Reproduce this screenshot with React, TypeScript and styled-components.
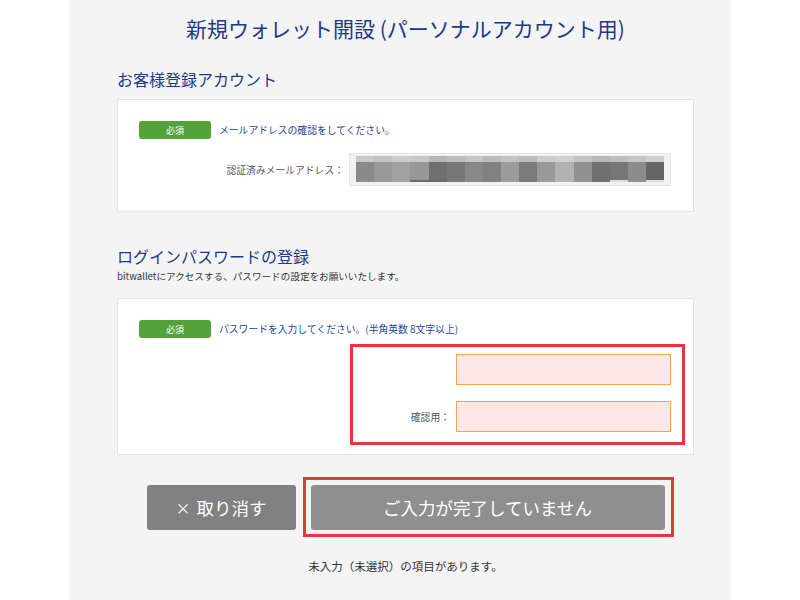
import React from "react";
import styled, { createGlobalStyle } from "styled-components";

const GlobalStyle = createGlobalStyle`
  html, body { margin: 0; padding: 0; background: #ffffff; }
  body { font-family: "Noto Sans CJK JP", "Noto Sans", sans-serif; }
  * { box-sizing: border-box; }
`;

const Page = styled.div`
  width: 662px;
  min-height: 600px;
  margin: 0 auto;
  background: #f4f4f4;
  padding: 13px 37px 0 48px;
  display: flex;
  flex-direction: column;
`;

const Title = styled.h1`
  margin: 0;
  font-size: 21px;
  font-weight: 400;
  line-height: 30px;
  color: #1c3a8a;
  text-align: center;
`;

const SectionHeading = styled.h2<{ $top: number }>`
  margin: ${(p) => p.$top}px 0 0;
  font-size: 16px;
  font-weight: 400;
  line-height: 24px;
  color: #1c3a8a;
`;

const SubText = styled.p`
  margin: 0;
  font-size: 9.6px;
  line-height: 16px;
  color: #333;
`;

const Card = styled.section<{ $pad: string; $top: number }>`
  margin-top: ${(p) => p.$top}px;
  background: #ffffff;
  border: 1px solid #e4e4e4;
  padding: ${(p) => p.$pad};
  display: flex;
  flex-direction: column;
`;

const RequiredRow = styled.div`
  display: flex;
  align-items: center;
  gap: 8px;
`;

const Badge = styled.span`
  flex: none;
  width: 72px;
  height: 18px;
  border-radius: 3px;
  background: #53a33b;
  color: #ffffff;
  font-size: 9px;
  display: flex;
  align-items: center;
  justify-content: center;
`;

const Message = styled.span`
  font-size: 9.8px;
  color: #23449a;
`;

const FieldRow = styled.div<{ $top: number; $labelW: number }>`
  margin-top: ${(p) => p.$top}px;
  display: grid;
  grid-template-columns: ${(p) => p.$labelW}px 1fr;
  column-gap: 5px;
  align-items: center;
`;

const Label = styled.span`
  text-align: right;
  font-size: 9.8px;
  color: #555;
`;

const MaskedField = styled.div`
  height: 33px;
  border: 1px solid #e6e6e6;
  background: #f2f2f2;
  padding: 2px 6px 3px 6px;
  display: flex;
  flex-direction: column;
`;

const MaskStrip = styled.div<{ $h: number }>`
  height: ${(p) => p.$h}px;
  display: flex;
`;

const MaskCell = styled.div`
  flex: 1;
`;

const Annotation = styled.div`
  border: 3px solid #e8343a;
`;

const PasswordBox = styled(Annotation)`
  margin-top: 6px;
  width: 335px;
  margin-left: auto;
  padding: 7px 11px 10px 0;
  display: flex;
  flex-direction: column;
  gap: 16px;
`;

const PwRow = styled.div`
  display: grid;
  grid-template-columns: 1fr 215px;
  column-gap: 6px;
  align-items: center;
`;

const PwInput = styled.input`
  display: block;
  height: 31px;
  width: 215px;
  margin: 0;
  border: 1px solid #f2a45a;
  background: #fde7e7;
  outline: none;
  padding: 0 6px;
`;

const ButtonRow = styled.div`
  margin-top: 30px;
  display: flex;
  justify-content: center;
  gap: 15px;
`;

const Button = styled.button<{ $w: number; $bg: string }>`
  width: ${(p) => p.$w}px;
  height: 45px;
  border: none;
  border-radius: 3px;
  background: ${(p) => p.$bg};
  color: #ffffff;
  font-family: "Noto Sans CJK JP", "Noto Sans", sans-serif;
  font-size: 17.5px;
  display: flex;
  align-items: center;
  justify-content: center;
  gap: 6px;
  padding: 0;
`;

const SubmitFrame = styled(Annotation)`
  padding: 5px 6px 4px 5px;
  margin: -8px -9px -7px -8px;
`;

const Times = styled.span`
  font-size: 15px;
`;

const Footer = styled.p`
  margin: 28px 0 0;
  text-align: center;
  font-size: 11.5px;
  color: #333;
`;

const topTones = ["#c9c9c9","#c4c4c4","#cccccc","#c8c8c8","#b6b6b6","#bdbdbd","#c6c6c6","#bbbbbb","#c4c4c4","#bcbcbc","#cdcdcd","#d2d2d2","#c5c5c5","#b8b8b8","#bdbdbd","#c6c6c6","#cfcfcf"];
const midTones = ["#8a8a8a","#999999","#a0a0a0","#979797","#6f6f6f","#777777","#888888","#818181","#9b9b9b","#7b7b7b","#999999","#b2b2b2","#919191","#707070","#767676","#8c8c8c","#666666"];
const lowTones = ["#8e8e8e","#9a9a9a","#a2a2a2","#6c6c6c","#6a6a6a","#7a7a7a","#8a8a8a","#838383","#9e9e9e","#7c7c7c","#9c9c9c","#b4b4b4","#939393","#727272","#dcdcdc","#8f8f8f","#dedede"];

const Strip = ({ tones, h }: { tones: string[]; h: number }) => (
  <MaskStrip $h={h}>
    {tones.map((c, i) => (
      <MaskCell key={i} style={{ background: c }} />
    ))}
  </MaskStrip>
);

export default function App() {
  return (
    <>
      <GlobalStyle />
      <Page>
        <Title>新規ウォレット開設 (パーソナルアカウント用)</Title>
        <SectionHeading $top={24}>お客様登録アカウント</SectionHeading>
        <Card $top={8} $pad="21px 22px 25px 21px">
          <RequiredRow>
            <Badge>必須</Badge>
            <Message>メールアドレスの確認をしてください。</Message>
          </RequiredRow>
          <FieldRow $top={14} $labelW={205}>
            <Label>認証済みメールアドレス：</Label>
            <MaskedField>
              <Strip tones={topTones} h={6} />
              <Strip tones={midTones} h={19} />
              <Strip tones={lowTones} h={2} />
            </MaskedField>
          </FieldRow>
        </Card>

        <SectionHeading $top={32}>ログインパスワードの登録</SectionHeading>
        <SubText>bitwalletにアクセスする、パスワードの設定をお願いいたします。</SubText>
        <Card $top={14} $pad="21px 8px 9px 21px">
          <RequiredRow>
            <Badge>必須</Badge>
            <Message>パスワードを入力してください。(半角英数 8文字以上)</Message>
          </RequiredRow>
          <PasswordBox>
            <PwRow>
              <Label />
              <PwInput type="password" />
            </PwRow>
            <PwRow>
              <Label>確認用：</Label>
              <PwInput type="password" />
            </PwRow>
          </PasswordBox>
        </Card>

        <ButtonRow>
          <Button $w={149} $bg="#818181">
            <Times>×</Times>取り消す
          </Button>
          <SubmitFrame>
            <Button $w={354} $bg="#8f8f8f">ご入力が完了していません</Button>
          </SubmitFrame>
        </ButtonRow>
        <Footer>未入力（未選択）の項目があります。</Footer>
      </Page>
    </>
  );
}
